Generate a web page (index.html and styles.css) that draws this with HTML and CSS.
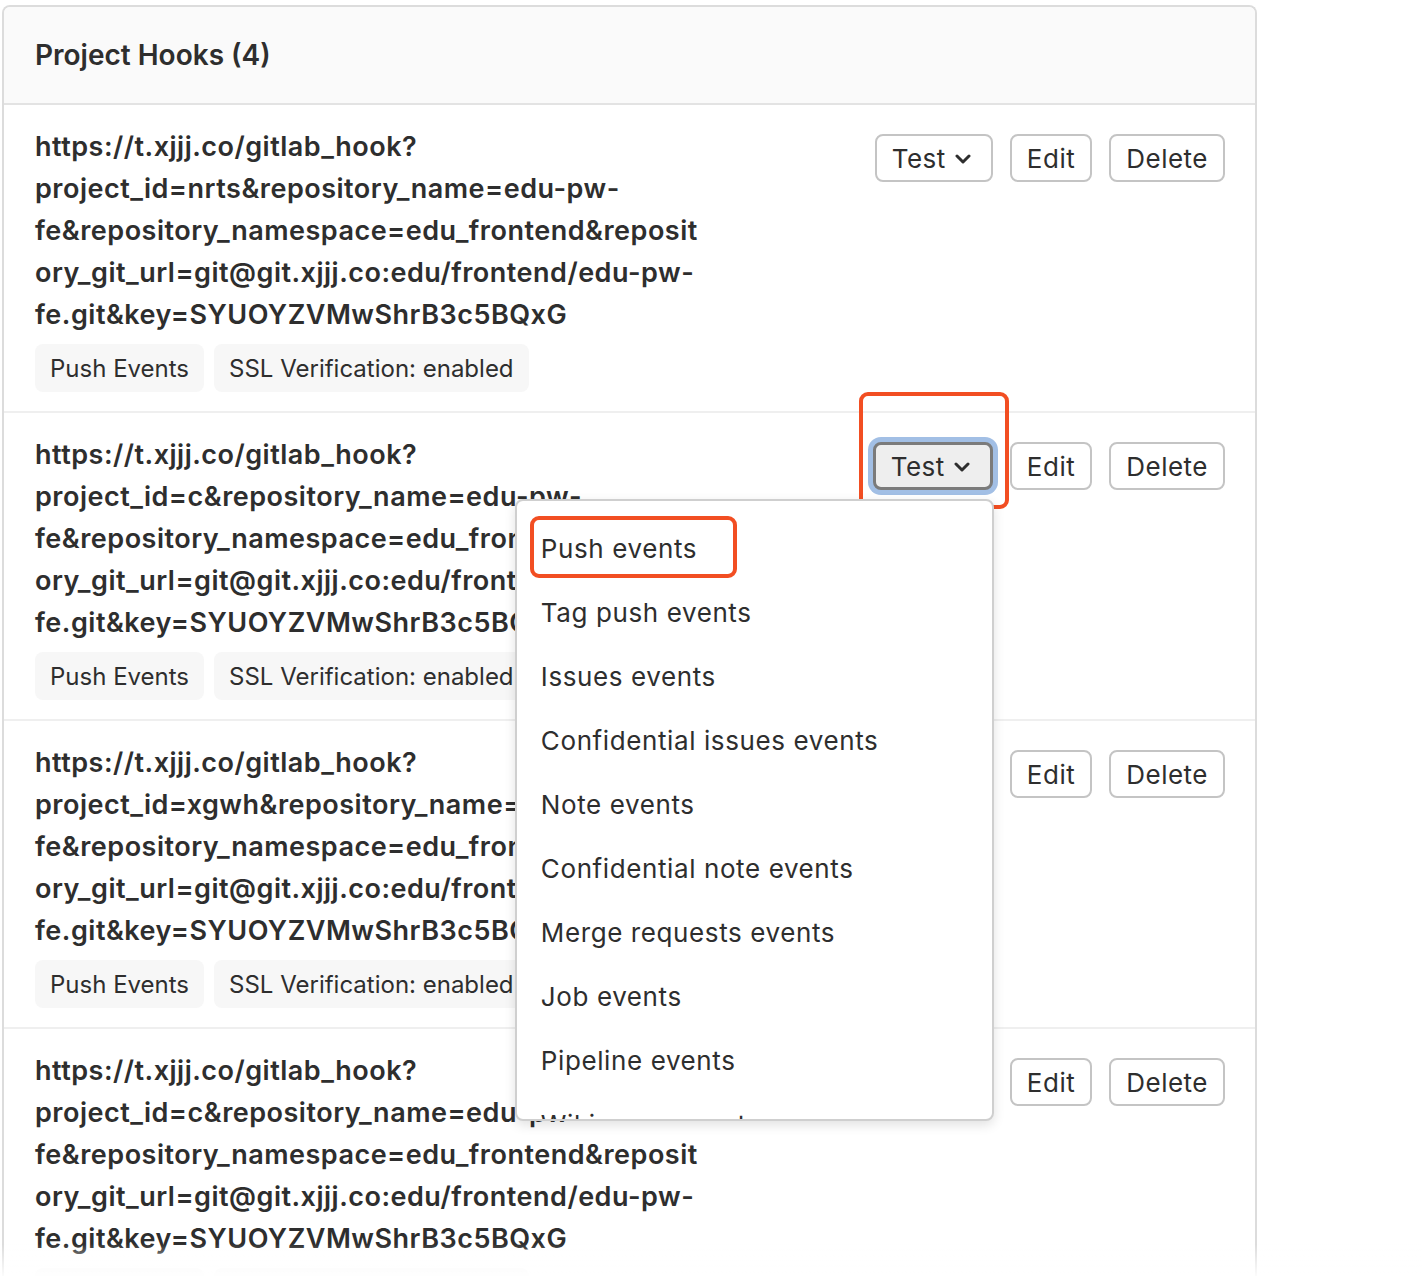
FILE: index.html
```html
<!DOCTYPE html>
<html lang="en">
<head>
<meta charset="utf-8">
<title>Project Hooks</title>
<link rel="stylesheet" href="styles.css">
</head>
<body>
<div class="page">
  <div class="panel">
    <div class="panel-header">Project Hooks (4)</div>
    <ul class="hook-list">
      <li class="hook-row">
        <div class="hook-info">
          <div class="hook-url">https://t.xjjj.co/gitlab_hook?<br>project_id=nrts&amp;repository_name=edu-pw-<br>fe&amp;repository_namespace=edu_frontend&amp;reposit<br>ory_git_url=git@git.xjjj.co:edu/frontend/edu-pw-<br>fe.git&amp;key=SYUOYZVMwShrB3c5BQxG</div>
          <div class="badges"><span class="badge">Push Events</span><span class="badge">SSL Verification: enabled</span></div>
        </div>
        <div class="hook-actions">
          <div class="dropdown"><button class="btn">Test <svg class="chev" viewBox="0 0 16 10" width="16" height="10"><path d="M2 2l6 6 6-6" fill="none" stroke="#2e2e2e" stroke-width="3" stroke-linecap="round" stroke-linejoin="round"/></svg></button></div>
          <button class="btn">Edit</button>
          <button class="btn">Delete</button>
        </div>
      </li>
      <li class="hook-row">
        <div class="hook-info">
          <div class="hook-url">https://t.xjjj.co/gitlab_hook?<br>project_id=c&amp;repository_name=edu-pw-<br>fe&amp;repository_namespace=edu_frontend&amp;reposit<br>ory_git_url=git@git.xjjj.co:edu/frontend/edu-pw-<br>fe.git&amp;key=SYUOYZVMwShrB3c5BQxG</div>
          <div class="badges"><span class="badge">Push Events</span><span class="badge">SSL Verification: enabled</span></div>
        </div>
        <div class="hook-actions">
          <div class="dropdown open">
            <button class="btn btn-focus">Test <svg class="chev" viewBox="0 0 16 10" width="16" height="10"><path d="M2 2l6 6 6-6" fill="none" stroke="#2e2e2e" stroke-width="3" stroke-linecap="round" stroke-linejoin="round"/></svg></button>
            <span class="annot annot-btn"></span>
            <ul class="menu">
              <li class="menu-item">Push events<span class="annot annot-item"></span></li>
              <li class="menu-item">Tag push events</li>
              <li class="menu-item">Issues events</li>
              <li class="menu-item">Confidential issues events</li>
              <li class="menu-item">Note events</li>
              <li class="menu-item">Confidential note events</li>
              <li class="menu-item">Merge requests events</li>
              <li class="menu-item">Job events</li>
              <li class="menu-item">Pipeline events</li>
              <li class="menu-item">Wiki page events</li>
            </ul>
          </div>
          <button class="btn">Edit</button>
          <button class="btn">Delete</button>
        </div>
      </li>
      <li class="hook-row">
        <div class="hook-info">
          <div class="hook-url">https://t.xjjj.co/gitlab_hook?<br>project_id=xgwh&amp;repository_name=edu-pw-<br>fe&amp;repository_namespace=edu_frontend&amp;reposit<br>ory_git_url=git@git.xjjj.co:edu/frontend/edu-pw-<br>fe.git&amp;key=SYUOYZVMwShrB3c5BQxG</div>
          <div class="badges"><span class="badge">Push Events</span><span class="badge">SSL Verification: enabled</span></div>
        </div>
        <div class="hook-actions">
          <div class="dropdown"><button class="btn">Test <svg class="chev" viewBox="0 0 16 10" width="16" height="10"><path d="M2 2l6 6 6-6" fill="none" stroke="#2e2e2e" stroke-width="3" stroke-linecap="round" stroke-linejoin="round"/></svg></button></div>
          <button class="btn">Edit</button>
          <button class="btn">Delete</button>
        </div>
      </li>
      <li class="hook-row">
        <div class="hook-info">
          <div class="hook-url">https://t.xjjj.co/gitlab_hook?<br>project_id=c&amp;repository_name=edu-pw-<br>fe&amp;repository_namespace=edu_frontend&amp;reposit<br>ory_git_url=git@git.xjjj.co:edu/frontend/edu-pw-<br>fe.git&amp;key=SYUOYZVMwShrB3c5BQxG</div>
          <div class="badges"><span class="badge">Push Events</span><span class="badge">SSL Verification: enabled</span></div>
        </div>
        <div class="hook-actions">
          <div class="dropdown"><button class="btn">Test <svg class="chev" viewBox="0 0 16 10" width="16" height="10"><path d="M2 2l6 6 6-6" fill="none" stroke="#2e2e2e" stroke-width="3" stroke-linecap="round" stroke-linejoin="round"/></svg></button></div>
          <button class="btn">Edit</button>
          <button class="btn">Delete</button>
        </div>
      </li>
    </ul>
  </div>
</div>
<div class="bottom-fade"></div>
</body>
</html>
```
FILE: styles.css
```css
* { box-sizing: border-box; }
html, body { margin: 0; padding: 0; background: #fff; }
body {
  font-family: Inter, "Noto Sans", "Liberation Sans", sans-serif;
  color: #2e2e2e;
}
.page {
  padding: 5px 0 0 2px;
  width: 1257px;
}
.panel {
  border: 2px solid #dcdcdc;
  border-bottom: none;
  border-radius: 8px 8px 0 0;
  background: #fff;
}
.panel-header {
  height: 98px;
  display: flex;
  align-items: center;
  padding: 0 31px;
  background: #fafafa;
  border-bottom: 2px solid #e3e3e3;
  border-radius: 6px 6px 0 0;
  font-size: 28px;
  font-weight: 600;
}
.hook-list {
  list-style: none;
  margin: 0;
  padding: 0;
}
.hook-row {
  display: flex;
  justify-content: space-between;
  align-items: flex-start;
  padding: 21px 30px 19px 31px;
  border-bottom: 2px solid #efefef;
}
.hook-url {
  font-size: 27px;
  font-weight: 600;
  line-height: 42px;
  letter-spacing: 0.5px;
  white-space: nowrap;
}
.badges {
  display: flex;
  gap: 10px;
  margin-top: 8px;
}
.badge {
  height: 48px;
  display: inline-flex;
  align-items: center;
  padding: 0 15px;
  background: #f7f7f7;
  border-radius: 8px;
  font-size: 24px;
}
.hook-actions {
  display: flex;
  gap: 17px;
  margin-top: 8px;
}
.dropdown { position: relative; }
.btn {
  height: 48px;
  display: inline-flex;
  align-items: center;
  gap: 9px;
  padding: 0 15px;
  background: #fff;
  border: 2px solid #c4c4c4;
  border-radius: 8px;
  font-family: inherit;
  font-size: 26px;
  letter-spacing: 0.5px;
  color: #2e2e2e;
}
.chev { display: block; margin-top: 2px; margin-right: 5px; }
.btn-focus {
  background: #eeeeee;
  border: 3px solid #7b7b7b;
  box-shadow: 0 0 0 5px #a2bfe5;
}
.annot {
  position: absolute;
  border: 4px solid #f24e22;
  border-radius: 9px;
  pointer-events: none;
}
.annot-btn {
  left: -14px;
  top: -50px;
  width: 150px;
  height: 117px;
}
.menu {
  position: absolute;
  right: -1px;
  top: 57px;
  width: 479px;
  height: 622px;
  margin: 0;
  padding: 15px 0 0;
  list-style: none;
  background: #fff;
  border: 2px solid #cfcfcf;
  border-radius: 8px;
  box-shadow: 0 4px 12px rgba(0, 0, 0, 0.12);
  overflow: hidden;
  z-index: 5;
}
.menu-item {
  position: relative;
  height: 64px;
  display: flex;
  align-items: center;
  padding: 0 24px;
  font-size: 26px;
  letter-spacing: 0.6px;
  white-space: nowrap;
}
.annot-item {
  left: 13px;
  top: 0;
  width: 207px;
  height: 62px;
}
.bottom-fade {
  position: fixed;
  left: 0;
  right: 0;
  bottom: 0;
  height: 32px;
  background: linear-gradient(to bottom, rgba(255,255,255,0) 0%, rgba(255,255,255,0.9) 100%);
  pointer-events: none;
  z-index: 10;
}
```
